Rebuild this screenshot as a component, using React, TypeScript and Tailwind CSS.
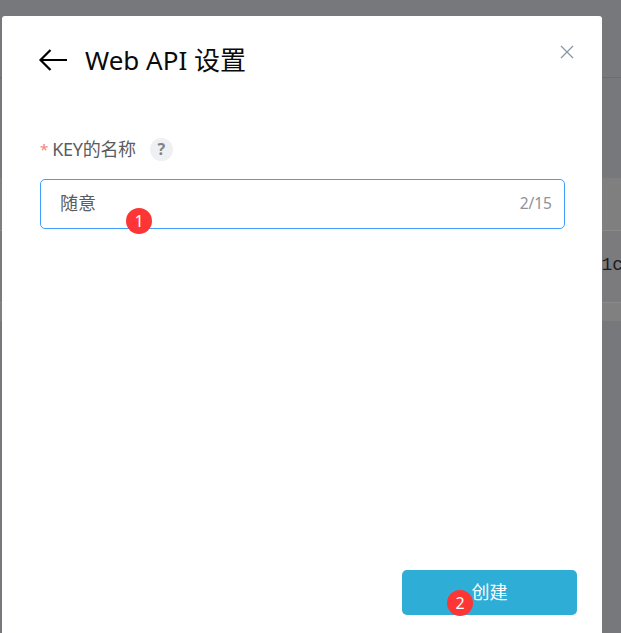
import React from "react";

const cjk = { fontFamily: '"Noto Sans", "Noto Sans CJK SC", sans-serif' };

function Badge({ n, className }: { n: number; className: string }) {
  return (
    <span className={`absolute flex h-[26px] w-[26px] items-center justify-center rounded-full bg-[#fd3535] text-[16px] text-white ${className}`}>
      {n}
    </span>
  );
}

export default function App() {
  return (
    <div className="relative h-[633px] w-[621px] overflow-hidden bg-[#77787c]" style={cjk}>
      {/* page behind the dialog */}
      <div className="flex h-full flex-col pt-[77px]">
        <div className="h-px bg-[#6c6d71]" />
        <div className="mt-[100px] h-[52px] bg-[#7f7f7f]" />
        <div className="h-px bg-[#8a8a8a]" />
        <div className="flex h-[71px] items-center justify-end bg-[#7b7b7d] pb-[2px] font-['Liberation_Mono'] text-[18px] font-medium text-[#1d1d1f]">
          <span className="-mr-[2px]">1c</span>
        </div>
        <div className="h-px bg-[#8a8a8a]" />
        <div className="h-[18px] bg-[#808080]" />
      </div>

      {/* dialog */}
      <div className="absolute left-[2px] top-[16px] flex h-[640px] w-[600px] flex-col rounded-[3px] bg-white">
        <div className="flex items-center pl-[36px] pt-[27px]">
          <svg width="30" height="24" viewBox="0 0 30 24" fill="none" stroke="#000" strokeWidth="2.2">
            <path d="M29 12H3M12.5 2 2.5 12l10 10" />
          </svg>
          <h1 className="ml-[17px] text-[26px] leading-[34px] text-[#0a0a0a]">Web API 设置</h1>
        </div>
        <button className="absolute right-[28px] top-[29px] text-[#8c97a6]" aria-label="关闭">
          <svg width="14" height="14" viewBox="0 0 14 14" fill="none" stroke="currentColor" strokeWidth="1.3">
            <path d="M1 1l12 12M13 1 1 13" />
          </svg>
        </button>

        <div className="mt-[60px] flex items-center pl-[38px]">
          <span className="mr-[4px] text-[15px] text-[#f0857c]">*</span>
          <span className="text-[18px] leading-[24px] tracking-[-0.3px] text-[#5a5c60]">KEY的名称</span>
          <span className="ml-[14px] flex h-[23px] w-[23px] items-center justify-center rounded-full bg-[#eef0f4] text-[16px] font-bold text-[#7f8389]">?</span>
        </div>

        <div className="relative ml-[38px] mt-[18px] flex h-[50px] w-[525px] items-center justify-between rounded-[5px] border border-[#409eff] pl-[19px] pr-[12px]">
          <span className="-mt-[1px] text-[18px] text-[#5a5c60]">随意</span>
          <span className="text-[15.5px] text-[#8f9296]">2/15</span>
        </div>

        <div className="mt-[341px] flex justify-end pr-[25px]">
          <button className="flex h-[45px] w-[175px] items-center justify-center rounded-[5px] bg-[#2eadd7] text-[18px] text-white">创建</button>
        </div>
      </div>

      <Badge n={1} className="left-[126px] top-[208px]" />
      <Badge n={2} className="left-[447px] top-[590px]" />
    </div>
  );
}
